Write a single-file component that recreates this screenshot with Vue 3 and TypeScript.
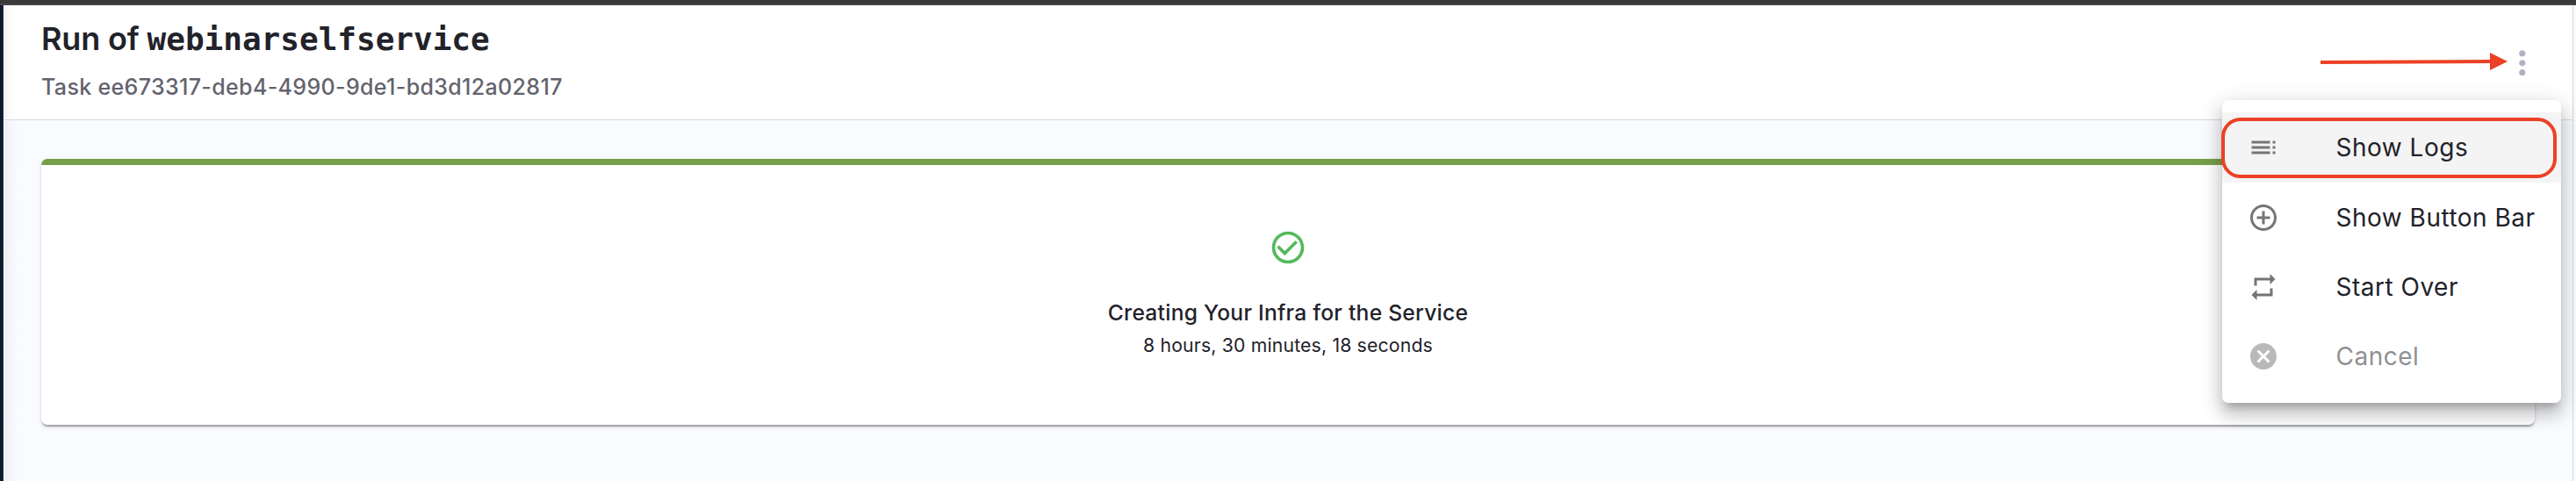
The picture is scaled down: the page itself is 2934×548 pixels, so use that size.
<script setup lang="ts">
interface MenuItem {
  label: string
  icon: string
  active?: boolean
  disabled?: boolean
}

const items: MenuItem[] = [
  {
    label: 'Show Logs',
    icon: 'M3 9h14V7H3v2zm0 4h14v-2H3v2zm0 4h14v-2H3v2zm16 0h2v-2h-2v2zm0-10v2h2V7h-2zm0 6h2v-2h-2v2z',
    active: true,
  },
  {
    label: 'Show Button Bar',
    icon: 'M13 7h-2v4H7v2h4v4h2v-4h4v-2h-4V7zm-1-5C6.48 2 2 6.48 2 12s4.48 10 10 10 10-4.48 10-10S17.52 2 12 2zm0 18c-4.41 0-8-3.59-8-8s3.59-8 8-8 8 3.59 8 8-3.59 8-8 8z',
  },
  {
    label: 'Start Over',
    icon: 'M7 7h10v3l4-4-4-4v3H5v6h2V7zm10 10H7v-3l-4 4 4 4v-3h12v-6h-2v4z',
  },
  {
    label: 'Cancel',
    icon: 'M12 2C6.47 2 2 6.47 2 12s4.47 10 10 10 10-4.47 10-10S17.53 2 12 2zm5 13.59L15.59 17 12 13.41 8.41 17 7 15.59 10.59 12 7 8.41 8.41 7 12 10.59 15.59 7 17 8.41 13.41 12 17 15.59z',
    disabled: true,
  },
]
</script>

<template>
  <div class="screen">
    <div class="topbar"></div>
    <div class="frame">
      <div class="rail"></div>
      <main class="page">
        <header class="header">
          <div>
            <h1 class="title"><span class="prefix">Run of </span><code>webinarselfservice</code></h1>
            <p class="task">Task ee673317-deb4-4990-9de1-bd3d12a02817</p>
          </div>
          <button class="more" aria-label="More actions">
            <svg viewBox="0 0 24 24"><path d="M12 8c1.1 0 2-.9 2-2s-.9-2-2-2-2 .9-2 2 .9 2 2 2zm0 2c-1.1 0-2 .9-2 2s.9 2 2 2 2-.9 2-2-.9-2-2-2zm0 6c-1.1 0-2 .9-2 2s.9 2 2 2 2-.9 2-2-.9-2-2-2z" /></svg>
          </button>
        </header>
        <section class="card">
          <svg class="check" viewBox="0 0 24 24"><path d="M16.59 7.58L10 14.17l-3.59-3.58L5 12l5 5 8-8zM12 2C6.48 2 2 6.48 2 12s4.48 10 10 10 10-4.48 10-10S17.52 2 12 2zm0 18c-4.42 0-8-3.58-8-8s3.58-8 8-8 8 3.58 8 8-3.58 8-8 8z" /></svg>
          <div class="step">Creating Your Infra for the Service</div>
          <div class="duration">8 hours, 30 minutes, 18 seconds</div>
        </section>
      </main>
      <div class="gutter"></div>
    </div>

    <div class="menu">
      <div
        v-for="item in items"
        :key="item.label"
        class="item"
        :class="{ active: item.active, disabled: item.disabled }"
      >
        <svg class="icon" viewBox="0 0 24 24"><path :d="item.icon" /></svg>
        <span>{{ item.label }}</span>
      </div>
    </div>
    <div class="highlight"></div>
    <svg class="arrow" viewBox="0 0 213 20">
      <path d="M0 11L194 10" stroke="#ec4125" stroke-width="4" />
      <path d="M193 0L213 10L193 20Z" fill="#ec4125" />
    </svg>
  </div>
</template>

<style>
body {
  overflow: hidden;
}
</style>

<style scoped>
.screen {
  position: relative;
  display: flex;
  flex-direction: column;
  width: 2934px;
  height: 548px;
  overflow: hidden;
  background: #fafbff;
  color: #22222a;
  font-family: Inter, "Liberation Sans", sans-serif;
}
.topbar {
  box-sizing: border-box;
  height: 6px;
  flex: none;
  background: #3a3a3a;
  border-bottom: 2px solid #454546;
}
.frame {
  display: flex;
  flex: 1;
}
.rail {
  box-sizing: border-box;
  width: 4px;
  background: #0f1a30;
  border-right: 1px solid #30343f;
}
.page {
  flex: 1;
  background: linear-gradient(90deg, rgba(20, 20, 40, 0.055), rgba(20, 20, 40, 0.015) 9px, transparent 18px);
}
.header {
  display: flex;
  justify-content: space-between;
  box-sizing: border-box;
  height: 131px;
  padding: 18px 35.5px 0 43px;
  background: linear-gradient(90deg, rgba(20, 20, 40, 0.04), rgba(20, 20, 40, 0.01) 8px, transparent 16px), #fff;
  border-bottom: 1px solid #d8d8e2;
}
.title {
  height: 40px;
  margin: 0;
  font-size: 36px;
  font-weight: 600;
  line-height: 40px;
  white-space: pre;
}
.prefix {
  letter-spacing: -0.15px;
}
.title code {
  font-family: "DejaVu Sans Mono", monospace;
  font-size: 36px;
  font-weight: 700;
}
.task {
  margin: 18.5px 0 0;
  color: #63636e;
  font-size: 25px;
  font-weight: 500;
  line-height: 32px;
  letter-spacing: 0.35px;
}
.more {
  width: 44px;
  height: 44px;
  margin-top: 25.8px;
  padding: 0;
  border: 0;
  background: none;
}
.more svg {
  display: block;
  width: 43.6px;
  height: 43.6px;
  fill: #b0b1c5;
}
.card {
  display: flex;
  flex-direction: column;
  align-items: center;
  box-sizing: border-box;
  width: 2840px;
  height: 303px;
  margin: 44px 0 0 43px;
  padding-top: 78.6px;
  overflow: hidden;
  background: #fff;
  background-image: linear-gradient(#769f4a 7px, transparent 7px);
  border-radius: 7px;
  box-shadow: 0 4px 2px -2px rgba(0, 0, 0, 0.2), 0 2px 2px rgba(0, 0, 0, 0.14), 0 2px 5px rgba(0, 0, 0, 0.12);
}
.check {
  width: 44px;
  height: 44px;
  flex: none;
  fill: #55b95c;
}
.step {
  margin-top: 33.4px;
  font-size: 24.6px;
  font-weight: 500;
  line-height: 38px;
  letter-spacing: 0.26px;
}
.duration {
  margin-top: 3.4px;
  font-size: 21.2px;
  line-height: 30px;
  letter-spacing: 0.18px;
}
.menu {
  position: absolute;
  top: 114px;
  left: 2531px;
  box-sizing: border-box;
  width: 386px;
  height: 345px;
  padding: 14px 0;
  background: #fff;
  border-radius: 7px;
  box-shadow: 0 9px 9px -5px rgba(0, 0, 0, 0.2), 0 14px 18px 2px rgba(0, 0, 0, 0.14), 0 5px 25px 4px rgba(0, 0, 0, 0.12);
}
.item {
  display: flex;
  align-items: center;
  box-sizing: border-box;
  height: 79.2px;
  padding-left: 29px;
  font-size: 28px;
  letter-spacing: 0.5px;
  white-space: nowrap;
}
.active {
  height: 80px;
  background: #f4f4f4;
}
.disabled {
  opacity: 0.5;
}
.icon {
  width: 36px;
  height: 36px;
  margin-right: 64.5px;
  flex: none;
  fill: #757575;
}
.highlight {
  position: absolute;
  top: 134px;
  left: 2530px;
  box-sizing: border-box;
  width: 382px;
  height: 69px;
  border: 4px solid #ec4125;
  border-radius: 22px;
}
.arrow {
  position: absolute;
  top: 60px;
  left: 2643px;
  width: 213px;
  height: 20px;
}
.gutter {
  box-sizing: border-box;
  width: 4px;
  border-left: 1px solid #d3d3df;
}
</style>
